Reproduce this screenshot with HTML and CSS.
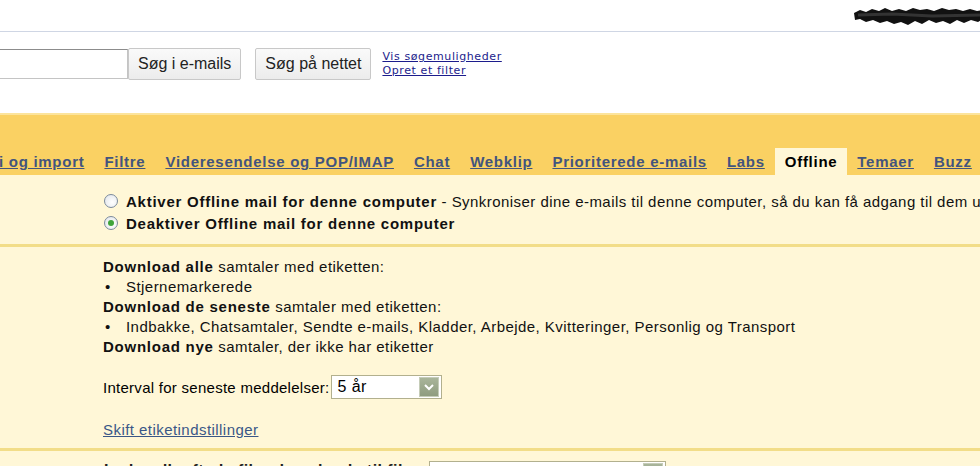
FILE: index.html
```html
<!DOCTYPE html>
<html lang="da">
<head>
<meta charset="utf-8">
<title>Indstillinger - Offline</title>
<link rel="stylesheet" href="styles.css">
</head>
<body>
<div class="page">
  <header class="topbar">
    <svg class="scribble" width="132" height="20" viewBox="0 0 132 20" aria-hidden="true">
      <path d="M2 6 L8 3 L14 5 L20 2 L27 4 L33 1 L40 4 L47 2 L54 4 L61 1 L68 3 L75 2 L82 4 L90 1 L97 3 L104 2 L111 4 L118 2 L125 4 L131 3 L131 12 L126 15 L119 13 L112 16 L105 13 L98 17 L91 14 L84 16 L77 13 L70 17 L63 14 L56 18 L49 15 L42 17 L35 14 L28 16 L21 13 L14 15 L8 12 L3 13 Z" fill="#111"/>
      <path d="M6 8 L40 7 L80 9 L128 8" stroke="#333" stroke-width="3" fill="none"/>
    </svg>
  </header>

  <div class="searchrow">
    <input class="searchbox" type="text" value="">
    <button class="btn">Søg i e-mails</button>
    <button class="btn">Søg på nettet</button>
    <div class="searchlinks">
      <a href="#">Vis søgemuligheder</a>
      <a href="#">Opret et filter</a>
    </div>
  </div>

  <nav class="tabs">
    <a class="tab" href="#">i og import</a>
    <a class="tab" href="#">Filtre</a>
    <a class="tab" href="#">Videresendelse og POP/IMAP</a>
    <a class="tab" href="#">Chat</a>
    <a class="tab" href="#">Webklip</a>
    <a class="tab" href="#">Prioriterede e-mails</a>
    <a class="tab" href="#">Labs</a>
    <span class="tab active">Offline</span>
    <a class="tab" href="#">Temaer</a>
    <a class="tab" href="#">Buzz</a>
  </nav>

  <main class="content">
    <section class="sec sec-radio">
      <label class="radio-row">
        <span class="radio"></span>
        <span><b>Aktiver Offline mail for denne computer</b> - Synkroniser dine e-mails til denne computer, så du kan få adgang til dem uden internetforbindelse</span>
      </label>
      <label class="radio-row">
        <span class="radio checked"></span>
        <span><b>Deaktiver Offline mail for denne computer</b></span>
      </label>
    </section>

    <section class="sec sec-labels">
      <div class="line"><b>Download alle</b> samtaler med etiketten:</div>
      <div class="line bullet"><span class="dot">•</span>Stjernemarkerede</div>
      <div class="line"><b>Download de seneste</b> samtaler med etiketten:</div>
      <div class="line bullet"><span class="dot">•</span>Indbakke, Chatsamtaler, Sendte e-mails, Kladder, Arbejde, Kvitteringer, Personlig og Transport</div>
      <div class="line"><b>Download nye</b> samtaler, der ikke har etiketter</div>
      <div class="interval">
        <span class="interval-label">Interval for seneste meddelelser:</span>
        <span class="select"><span class="select-val">5 år</span><span class="select-btn"><svg width="10" height="8" viewBox="0 0 10 8"><path d="M1 2 L5 6 L9 2" stroke="#fff" stroke-width="2" fill="none"/></svg></span></span>
      </div>
      <a class="skift" href="#">Skift etiketindstillinger</a>
    </section>

    <section class="sec sec-bottom">
      <span class="bottom-label">Lad vedhæftede filer downloade til filer:</span>
      <span class="select wide"><span class="select-val"></span><span class="select-btn"></span></span>
    </section>
  </main>
</div>
</body>
</html>
```

FILE: styles.css
```css
html, body {
  margin: 0;
  padding: 0;
  background: #ffffff;
}
.page {
  width: 980px;
  height: 466px;
  overflow: hidden;
  font-family: "Liberation Sans", Arial, sans-serif;
  color: #000;
}
.topbar {
  height: 31px;
  border-bottom: 1px solid #cfd6e4;
  display: flex;
  justify-content: flex-end;
  align-items: flex-start;
  overflow: hidden;
}
.scribble {
  margin-top: 7px;
  margin-right: -4px;
}
.searchrow {
  display: flex;
  align-items: center;
  height: 34px;
  margin-top: 15px;
  margin-bottom: 32px;
}
.searchbox {
  box-sizing: border-box;
  width: 130px;
  height: 30px;
  margin: 0 0 0 -2px;
  border: 1px solid #c4c4c4;
  border-top-color: #8c8c8c;
  background: #fff;
}
.btn {
  box-sizing: border-box;
  height: 32px;
  padding: 0 9px;
  border: 1px solid #c8c8c8;
  border-radius: 2px;
  background: linear-gradient(#fafafa, #ececec);
  font-family: "Liberation Sans", Arial, sans-serif;
  font-size: 16px;
  color: #222;
  margin-right: 14px;
}
.searchlinks {
  display: flex;
  flex-direction: column;
  margin-left: -3px;
  font-family: "DejaVu Sans", Verdana, sans-serif;
  font-size: 11px;
  letter-spacing: 0.6px;
  line-height: 14px;
}
.searchlinks a {
  color: #1c1c8c;
  text-decoration: underline;
}
.tabs {
  height: 60px;
  background: #fad163;
  border-top: 2px solid #fce49c;
  display: flex;
  align-items: flex-end;
  white-space: nowrap;
}
.tab {
  display: block;
  padding: 5px 10px 5px;
  line-height: 17px;
  font-size: 15px;
  font-weight: bold;
  color: #42547e;
  text-decoration: underline;
  letter-spacing: 0.72px;
}
.tab:first-child {
  margin-left: -11px;
}
.tab.active {
  background: #fff7d7;
  color: #000;
  text-decoration: none;
}
.content {
  background: #fff7d7;
  font-size: 15px;
  letter-spacing: 0.45px;
}
.content b {
  letter-spacing: 0.75px;
}
.sec {
  border-bottom: 3px solid #f2dd88;
  padding-left: 103px;
  white-space: nowrap;
}
.sec-radio {
  padding-top: 15px;
  padding-bottom: 10px;
}
.radio-row {
  display: flex;
  align-items: center;
  height: 22px;
  color: #111;
}
.radio {
  box-sizing: border-box;
  width: 14px;
  height: 14px;
  border-radius: 50%;
  border: 1px solid #7b8a9c;
  background: radial-gradient(circle at 60% 60%, #ffffff 0%, #dfe3e8 100%);
  margin: 0 8px 0 1px;
  flex: none;
  display: flex;
  align-items: center;
  justify-content: center;
}
.radio.checked::after {
  content: "";
  width: 6px;
  height: 6px;
  border-radius: 50%;
  background: #3fa43a;
}
.sec-labels {
  padding-top: 10px;
  padding-bottom: 8px;
}
.line {
  height: 20px;
  line-height: 20px;
  color: #111;
}
.bullet .dot {
  display: inline-block;
  width: 23px;
  padding-left: 2px;
  box-sizing: border-box;
}
.interval {
  display: flex;
  align-items: center;
  margin-top: 18px;
  height: 24px;
}
.interval-label {
  letter-spacing: 0.27px;
}
.select {
  box-sizing: border-box;
  display: inline-flex;
  align-items: center;
  justify-content: space-between;
  width: 111px;
  height: 24px;
  margin-left: 1px;
  border: 1px solid #b2b08e;
  background: #fff;
  padding: 1px 2px 1px 6px;
  font-size: 16px;
}
.select-btn {
  box-sizing: border-box;
  width: 20px;
  height: 20px;
  background: linear-gradient(#a9b59a, #8f9c7f);
  border: 1px solid #c5ccb8;
  display: flex;
  align-items: center;
  justify-content: center;
}
.skift {
  display: block;
  margin-top: 21px;
  line-height: 20px;
  color: #3a5787;
  text-decoration: underline;
}
.sec-bottom {
  border-bottom: none;
  display: flex;
  align-items: flex-start;
  padding-top: 11px;
  padding-left: 104px;
  font-weight: bold;
  font-size: 16px;
  color: #222;
}
.bottom-label {
  width: 324px;
  line-height: 18px;
}
.select.wide {
  width: 237px;
  height: 24px;
  margin-top: -1px;
}
```
